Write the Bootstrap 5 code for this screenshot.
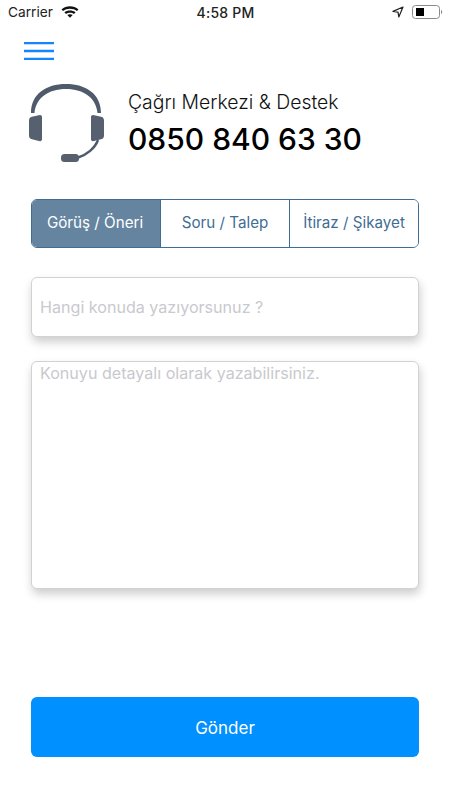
<!DOCTYPE html>
<html lang="tr">
<head>
  <meta charset="UTF-8">
  <meta name="viewport" content="width=device-width, initial-scale=1">
  <title>Çağrı Merkezi</title>
  <link href="https://cdn.jsdelivr.net/npm/bootstrap@5.3.3/dist/css/bootstrap.min.css" rel="stylesheet">
  <style>
    body { font-family: Inter, "Liberation Sans", sans-serif; background: #fff; width: 450px; height: 800px; overflow: hidden; }
    .status-bar { height: 24px; padding: 0 7px 0 8px; font-size: 13.7px; color: #222; }
    .status-side { width: 150px; }
    .status-time { font-size: 14px; font-weight: 500; letter-spacing: .2px; }
    .menu-btn { display: block; margin: 18px 0 0 24px; width: 30px; height: 18px; line-height: 0; }
    .head-row { margin: 24px 0 0 28px; height: 79px; }
    .head-title { font-size: 19.4px; font-weight: 300; color: #111; line-height: 22px; margin-top: 7px; }
    .head-phone { font-size: 30px; font-weight: 500; color: #000; line-height: 38px; margin-top: 7px; }
    .tabs-wrap { margin: 36px 31px 0 31px; height: 49px; border: 1px solid #3f6d94; border-radius: 6px; overflow: hidden; }
    .tab-item { width: 129px; font-size: 15.2px; color: #3f6d94; background: #fff; border-left: 1px solid #3f6d94; }
    .tab-item:first-child { width: 128px; padding-right: 2px; border-left: 0; background: #6484a0; color: #fff; }
    .tab-item:last-child { flex: 1; }
    .field-box { margin: 0 31px; width: 388px; display: block; border: 1px solid #d2d2d2; border-radius: 6px; box-shadow: 1px 5px 10px rgba(0,0,0,.2); padding: 0 8px; font-size: 16.1px; color: #333; background: #fff; outline: 0; }
    .field-box::placeholder { color: #c9c9ce; opacity: 1; }
    .field-one { height: 60px; margin-top: 29px; }
    .field-two { height: 228px; margin-top: 24px; padding-top: 0; resize: none; line-height: 22px; }
    .send-btn { display: block; margin: 108px 0 0 31px; width: 388px; height: 60px; padding-top: 10px; background: #0090ff; border: 0; border-radius: 6px; color: #fff; font-size: 17px; }
  </style>
</head>
<body>
  <div class="status-bar d-flex align-items-center justify-content-between">
    <div class="status-side d-flex align-items-center gap-2">
      <span>Carrier</span>
      <svg width="18" height="13" viewBox="0 0 18 13"><path d="M0.5 4.4C5.2 0.2 12.8 0.2 17.5 4.4L15.9 6.1C12.1 2.9 5.9 2.9 2.1 6.1Z" fill="#111"/><path d="M3.4 7.3C6.4 4.8 11.6 4.8 14.6 7.3L13 9C11 7.4 7 7.4 5 9Z" fill="#111"/><path d="M6.3 10.1C7.7 9 10.3 9 11.7 10.1L9 12.8Z" fill="#111"/></svg>
    </div>
    <span class="status-time">4:58 PM</span>
    <div class="status-side d-flex align-items-center justify-content-end gap-2">
      <svg width="12" height="12" viewBox="0 0 12 12"><path d="M11 1L1 5.4L6 6.2L6.8 11Z" fill="none" stroke="#222" stroke-width="1.2" stroke-linejoin="round"/></svg>
      <svg width="31" height="14" viewBox="0 0 31 14"><rect x="0.5" y="0.5" width="27" height="13" rx="3" fill="none" stroke="#8a8a8a"/><rect x="4" y="3" width="8" height="8" fill="#000"/><path d="M29 5v4c.8-.3 1.200-1 1.200-2s-.4-1.700-1.200-2z" fill="#8a8a8a"/></svg>
    </div>
  </div>

  <a class="menu-btn" href="#" aria-label="Menü">
    <svg width="30" height="18" viewBox="0 0 30 18"><path d="M0 1H30M0 9H30M0 17H30" stroke="#1485ff" stroke-width="2.400"/></svg>
  </a>

  <div class="head-row d-flex">
    <svg width="76" height="79" viewBox="0 0 76 79" class="flex-shrink-0">
      <path d="M3 29C3 10 18 0 38 0S73 10 73 29H69.500C68 14 56 5 38 5S8 14 6.500 29Z" fill="#4f5b6b"/>
      <path d="M1 37C1 34 2 33 5 32.500L12 31C13.500 31 14 32 14 33V55C14 56.500 13 57.500 12 57.200L5 55.500C2 55 1 54 1 51Z" fill="#56606f"/>
      <path d="M76 37C76 34 75 33 72 32.500L65 31C63.500 31 63 32 63 33V55C63 56.500 64 57.500 65 57.200L72 55.500C75 55 76 54 76 51Z" fill="#56606f"/>
      <path d="M70 56C67 64 59 71 49 74" fill="none" stroke="#4f5b6b" stroke-width="2.500"/>
      <rect x="33" y="70" width="18" height="8" rx="3.500" fill="#56606f"/>
    </svg>
    <div class="ms-4">
      <div class="head-title">Çağrı Merkezi &amp; Destek</div>
      <div class="head-phone">0850 840 63 30</div>
    </div>
  </div>

  <div class="tabs-wrap d-flex">
    <div class="tab-item d-flex align-items-center justify-content-center">Görüş / Öneri</div>
    <div class="tab-item d-flex align-items-center justify-content-center">Soru / Talep</div>
    <div class="tab-item d-flex align-items-center justify-content-center">İtiraz / Şikayet</div>
  </div>

  <input class="field-box field-one" type="text" placeholder="Hangi konuda yazıyorsunuz ?">
  <textarea class="field-box field-two" placeholder="Konuyu detayalı olarak yazabilirsiniz."></textarea>

  <button class="btn send-btn" type="button">Gönder</button>

  <script src="https://cdn.jsdelivr.net/npm/bootstrap@5.3.3/dist/js/bootstrap.bundle.min.js"></script>
</body>
</html>
